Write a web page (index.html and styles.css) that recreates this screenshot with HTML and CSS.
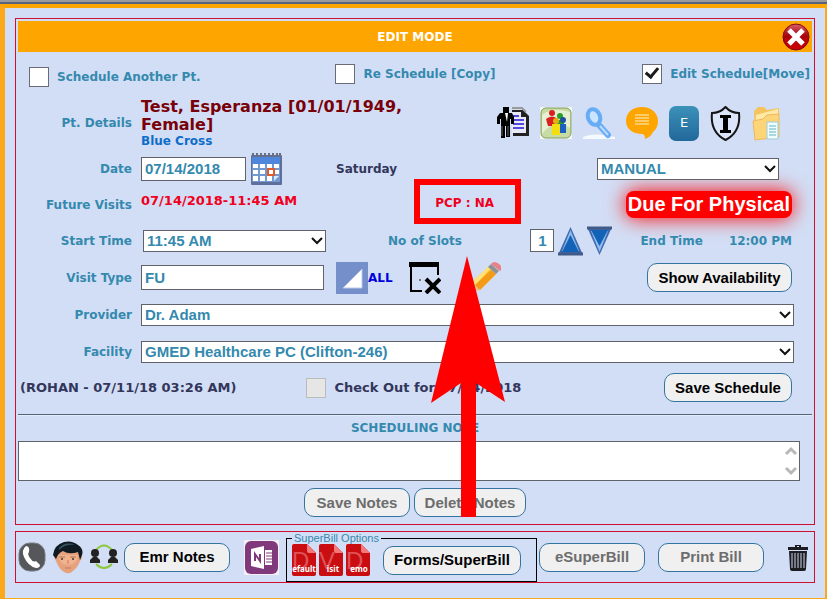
FILE: index.html
```html
<!DOCTYPE html>
<html lang="en">
<head>
<meta charset="utf-8">
<meta name="viewport" content="width=device-width, initial-scale=1">
<title>Edit Mode</title>
<link rel="stylesheet" href="styles.css">
</head>
<body>
<main class="dialog">
  <form class="panel">
    <header class="titlebar">
      <h1>EDIT MODE</h1>
      <button type="button" class="icon-btn close" aria-label="Close">
        <svg width="28" height="28" viewBox="0 0 28 28"><defs><linearGradient id="gc" x1="0" y1="0" x2="0" y2="1"><stop offset="0" stop-color="#d9606a"/><stop offset=".45" stop-color="#a8040e"/><stop offset="1" stop-color="#d00000"/></linearGradient></defs><circle cx="14" cy="14" r="13" fill="url(#gc)" stroke="#7c0a10"/><path d="M7 7l14 14M21 7L7 21" stroke="#fff" stroke-width="5"/></svg>
      </button>
    </header>

    <div class="modes">
      <label class="check low"><input type="checkbox"><span>Schedule Another Pt.</span></label>
      <label class="check copy"><input type="checkbox"><span>Re Schedule [Copy]</span></label>
      <label class="check"><input type="checkbox" checked><span>Edit Schedule[Move]</span></label>
    </div>

    <div class="row patient">
      <span class="label">Pt. Details</span>
      <div class="field">
        <div class="who"><strong>Test, Esperanza [01/01/1949, Female]</strong><span>Blue Cross</span></div>
        <div class="tools">
          <svg width="32" height="34" viewBox="0 0 32 34"><path d="M15 4h11l6 6v20H16V27h12V12h-5V7H15z" fill="#222"/><path d="M15 6h9v5h5v16H15z" fill="#e8eaf6"/><path d="M15 2h10l4 4" fill="none" stroke="#999" stroke-width="2"/><path d="M16 10h6M16 14h11M16 18h11M16 22h11" stroke="#5248e0" stroke-width="2"/><path d="M6 1h6v6H6zM3 7h12l2 4v7h-3v-5h-1v18h-4V20H8v12H4V13H3v5H0v-7z" fill="#000"/><path d="M8 7h3l-1 9z" fill="#fff"/><path d="M5 20v10M11 20v10" stroke="#666"/></svg>
          <svg width="32" height="32" viewBox="0 0 32 32"><rect width="32" height="32" fill="#f5f8ef"/><rect x="1" y="1" width="30" height="30" rx="5" fill="#c7dba4" stroke="#809b60"/><path d="M2 8q10-8 28-3v16Q15 10 2 27z" fill="#e7efd3"/><circle cx="12" cy="6" r="3" fill="#d82020"/><path d="M6 12q6-5 12 0v7H8z" fill="#d82020"/><circle cx="20" cy="9" r="3" fill="#28a028"/><path d="M15 15q5-4 9-1v6h-9z" fill="#28a028"/><circle cx="23" cy="13" r="3" fill="#1e50a0"/><path d="M19 17h7v9h-7z" fill="#1b5fc0"/><circle cx="16" cy="14" r="3" fill="#e2b010"/><path d="M12 17h8v11h-8z" fill="#f3df10"/></svg>
          <svg width="32" height="32" viewBox="0 0 32 32"><path d="M0 30q10-5 32 0v2H0z" fill="#f4faff"/><ellipse cx="11" cy="10" rx="6" ry="8" fill="#cbe4ff" stroke="#67adf5" stroke-width="4" transform="rotate(-20 11 10)"/><path d="M16 18l9 10" stroke="#67adf5" stroke-width="6" stroke-linecap="round"/><path d="M17 19l8 9" stroke="#b9dcff" stroke-width="2"/></svg>
          <svg width="32" height="32" viewBox="0 0 32 32"><path d="M16 0C6 0 0 6 0 14s7 13 16 13q3 0 3 5 6-2 8-7 5-4 5-11C32 6 25 0 16 0z" fill="#ffa500"/><path d="M9 8h14M9 11h14M9 14h14M9 17h14" stroke="#fff2d0"/></svg>
          <svg width="30" height="35" viewBox="0 0 30 35"><defs><linearGradient id="ge" x1="0" y1="0" x2="0" y2="1"><stop offset="0" stop-color="#3b91b8"/><stop offset="1" stop-color="#22689b"/></linearGradient></defs><rect width="30" height="35" rx="7" fill="url(#ge)"/><text x="15" y="21" text-anchor="middle" class="tool-e">E</text></svg>
          <svg width="31" height="35" viewBox="0 0 31 35"><path d="M15.500 1Q10 7 2 7q-2 19 13.500 27Q31 26 29 7 21 7 15.500 1z" fill="#dbe4f8" stroke="#151515" stroke-width="2"/><path d="M10 9h11v3h-3v12h3v3H10v-3h3V12h-3z" fill="#000"/></svg>
          <svg width="30" height="35" viewBox="0 0 30 35"><path d="M2 5l4-4h6l3 3 12-2v26L3 33z" fill="#f5c45f"/><path d="M4 9l22-6v23L4 32z" fill="#ffeaa5"/><path d="M1 15l10-2 4-4 12-1v23L3 34z" fill="#fcd578" stroke="#edb85d"/><path d="M15 16h11v17H15z" fill="#f0fcff" stroke="#9fcbd5"/><path d="M17 20h7M17 23h7M17 26h7M17 29h7" stroke="#61b5c7"/></svg>
        </div>
      </div>
    </div>

    <div class="row">
      <label class="label" for="date">Date</label>
      <div class="field">
        <input class="date" id="date" type="text" value="07/14/2018">
        <button type="button" class="icon-btn" aria-label="Open calendar"><svg width="32" height="32" viewBox="0 0 32 32"><rect x="1" y="2" width="31" height="30" rx="1" fill="#5e6f9c"/><rect x="2" y="4" width="28" height="7" fill="#4e86db"/><rect x="2" y="11" width="28" height="18" fill="#7298d2"/><path d="M3 11h5v4H3zM10 11h5v4h-5zM17 11h5v4h-5zM24 11h5v4h-5zM3 17h5v4H3zM10 17h5v4h-5zM24 17h5v4h-5zM3 23h5v5H3zM10 23h5v5h-5zM17 23h5v5h-5z" fill="#fff"/><path d="M18 16h6v6h-6z" fill="#fff" stroke="#df5b27" stroke-width="2"/><path d="M24 23h5l-5 5z" fill="#dce8ff"/><path d="M3 0v4M7 0v4M11 0v4M15 0v4M19 0v4M23 0v4M27 0v4M30 0v4" stroke="#6b7080" stroke-width="2"/></svg></button>
        <span class="dark day">Saturday</span>
        <span class="select manual"><select aria-label="Schedule type"><option>MANUAL</option></select><svg width="12" height="8" viewBox="0 0 12 8"><path d="M1 1l5 5 5-5"/></svg></span>
      </div>
    </div>

    <div class="row future">
      <span class="label">Future Visits</span>
      <div class="field">
        <span class="alert visit">07/14/2018-11:45 AM</span>
        <span class="alert pcp">PCP : NA</span>
        <strong class="due">Due For Physical</strong>
      </div>
    </div>

    <div class="row">
      <label class="label" for="start">Start Time</label>
      <div class="field">
        <span class="select short"><select id="start"><option>11:45 AM</option></select><svg width="12" height="8" viewBox="0 0 12 8"><path d="M1 1l5 5 5-5"/></svg></span>
        <label class="slots-label" for="slots">No of Slots</label>
        <input class="slots" id="slots" type="text" value="1">
        <button type="button" class="icon-btn up" aria-label="More slots"><svg width="25" height="30" viewBox="0 0 25 30"><path d="M12.500 1L25 29H0z" fill="#4169ae"/><path d="M12.500 4L21 25H4z" fill="#8fbdf0"/><path d="M12.500 9L21 26H4z" fill="#1263b8"/><path d="M0 28h25" stroke="#405b85" stroke-width="3"/></svg></button>
        <button type="button" class="icon-btn down" aria-label="Fewer slots"><svg width="25" height="30" viewBox="0 0 25 30"><path d="M12.500 29L0 1h25z" fill="#4169ae"/><path d="M12.500 26L4 5h17z" fill="#8fbdf0"/><path d="M12.500 20L4 4h17z" fill="#1263b8"/><path d="M0 2h25" stroke="#405b85" stroke-width="3"/></svg></button>
        <span class="end">End Time</span><span class="end-value">12:00 PM</span>
      </div>
    </div>

    <div class="row">
      <label class="label" for="type">Visit Type</label>
      <div class="field">
        <input class="type" id="type" type="text" value="FU">
        <button type="button" class="icon-btn all"><svg width="32" height="32" viewBox="0 0 32 32"><rect width="32" height="32" fill="#758fcb"/><path d="M26 7v19H7z" fill="#fff" stroke="#b9c8ea"/></svg><span>ALL</span></button>
        <button type="button" class="icon-btn block" aria-label="Block slot"><svg width="32" height="32" viewBox="0 0 32 32"><path d="M1 3h28M2 1v29M1 29h12M29 1v12" fill="none" stroke="#000" stroke-width="2"/><path d="M0 0h30v5H0z"/><path d="M10 18h2" stroke="#777" stroke-width="2"/><path d="M17 17l14 14M31 17L17 31" stroke="#000" stroke-width="4"/></svg></button>
        <button type="button" class="icon-btn" aria-label="Edit visit type"><svg width="34" height="34" viewBox="0 0 34 34"><path d="M2 32l3-11 8 8z" fill="#e8c18a"/><path d="M5 21L21 6l8 7-16 16z" fill="#ffc32a"/><path d="M8 24L24 9l5 4-16 16z" fill="#f39a16"/><path d="M5 21L21 6l2 2L8 24z" fill="#ffe27b"/><path d="M21 6l3-3 8 7-3 3z" fill="#8d9296"/><path d="M24 3q3-4 8 0t1 7z" fill="#e98288"/></svg></button>
        <button type="button" class="btn end-btn availability">Show Availability</button>
      </div>
    </div>

    <div class="row">
      <label class="label" for="provider">Provider</label>
      <div class="field"><span class="select full"><select id="provider"><option>Dr. Adam</option></select><svg width="12" height="8" viewBox="0 0 12 8"><path d="M1 1l5 5 5-5"/></svg></span></div>
    </div>

    <div class="row">
      <label class="label" for="facility">Facility</label>
      <div class="field"><span class="select full"><select id="facility"><option>GMED Healthcare PC (Clifton-246)</option></select><svg width="12" height="8" viewBox="0 0 12 8"><path d="M1 1l5 5 5-5"/></svg></span></div>
    </div>

    <div class="saved">
      <span class="dark">(ROHAN - 07/11/18 03:26 AM)</span>
      <label class="check dark"><input type="checkbox" disabled><span>Check Out for 07/14/2018</span></label>
      <button type="button" class="btn end-btn schedule">Save Schedule</button>
    </div>

    <hr>
    <label class="note-title" for="note">SCHEDULING NOTE</label>
    <div class="note">
      <textarea id="note"></textarea>
      <svg width="14" height="32" viewBox="0 0 14 32"><path d="M2 9l5-5 5 5M2 23l5 5 5-5"/></svg>
    </div>
    <div class="note-actions">
      <button type="button" class="btn" disabled>Save Notes</button>
      <button type="button" class="btn delete" disabled>Delete Notes</button>
    </div>
  </form>

  <footer class="panel actions">
    <button type="button" class="icon-btn" aria-label="Call"><svg width="28" height="30" viewBox="0 0 28 30"><rect x="1" y="1" width="26" height="28" rx="11" fill="#55575a" stroke="#777a80"/><path d="M8 4q-5 4-2 11 4 9 12 11 4 0 4-3l-4-4q-3 2-6-3-3-4-1-6 1-6-3-6z" fill="#fff"/></svg></button>
    <button type="button" class="icon-btn face" aria-label="Patient profile"><svg width="30" height="33" viewBox="0 0 30 33"><path d="M3 14q-3 2 0 6 3 8 8 11 5 3 9-1 5-4 7-10 4-5 0-7L24 6H6z" fill="#e6a17d"/><path d="M5 14h20q0 9-10 10Q7 24 5 14z" fill="#f1b38f"/><path d="M0 14Q1 4 11 1q8-2 14 3 6 4 4 10l-2 5-2-8q-9 3-15-1-5 2-7 8z" fill="#101a22"/><path d="M6 7q7-7 16-3-10-1-16 5z" fill="#365263"/><path d="M6 16h6M17 16h6" stroke="#a8704f"/><circle cx="9" cy="18" r="1" fill="#4a3529"/><circle cx="20" cy="18" r="1" fill="#4a3529"/><path d="M15 19v4M12 27h6" stroke="#c9795f"/></svg></button>
    <button type="button" class="icon-btn" aria-label="Transfer"><svg width="28" height="26" viewBox="0 0 28 26"><path d="M6 6q8-9 16 0M6 20q8 8 16 0" fill="none" stroke="#8dc63f" stroke-width="2"/><g fill="#222"><circle cx="5" cy="9" r="4"/><path d="M0 19v-3l3-3h4l3 3v3z"/><circle cx="23" cy="9" r="4"/><path d="M18 19v-3l3-3h4l3 3v3z"/></g></svg></button>
    <button type="button" class="btn emr">Emr Notes</button>
    <button type="button" class="icon-btn onenote" aria-label="OneNote"><svg width="35" height="35" viewBox="0 0 35 35"><rect width="35" height="35" fill="#f5f0f8"/><rect x="1" y="1" width="33" height="33" rx="6" fill="#80397b"/><path d="M21 10h7v15h-7z" fill="#fff"/><path d="M22 13h6M22 16h6M22 19h6M22 22h6" stroke="#80397b"/><path d="M7 9l13-3v23L7 26z" fill="#fff"/><path d="M11 21v-7l5 7v-7" fill="none" stroke="#80397b" stroke-width="2"/></svg></button>
    <fieldset>
      <legend>SuperBill Options</legend>
      <button type="button" class="icon-btn"><svg class="pdf" width="24" height="32" viewBox="0 0 24 32"><path d="M2 0h13l9 9v21q0 2-2 2H2q-2 0-2-2V2q0-2 2-2z" fill="#c90d11"/><path d="M15 0l9 9h-7q-2 0-2-2z" fill="#f4797b"/><text x="0" y="25" class="big">D</text><text x="12" y="28" class="small">efault</text></svg></button>
      <button type="button" class="icon-btn"><svg class="pdf" width="24" height="32" viewBox="0 0 24 32"><path d="M2 0h13l9 9v21q0 2-2 2H2q-2 0-2-2V2q0-2 2-2z" fill="#c90d11"/><path d="M15 0l9 9h-7q-2 0-2-2z" fill="#f4797b"/><text x="0" y="25" class="big">V</text><text x="14" y="28" class="small">isit</text></svg></button>
      <button type="button" class="icon-btn"><svg class="pdf" width="24" height="32" viewBox="0 0 24 32"><path d="M2 0h13l9 9v21q0 2-2 2H2q-2 0-2-2V2q0-2 2-2z" fill="#c90d11"/><path d="M15 0l9 9h-7q-2 0-2-2z" fill="#f4797b"/><text x="0" y="25" class="big">D</text><text x="13" y="28" class="small">emo</text></svg></button>
      <button type="button" class="btn forms">Forms/SuperBill</button>
    </fieldset>
    <button type="button" class="btn esuper" disabled>eSuperBill</button>
    <button type="button" class="btn print" disabled>Print Bill</button>
    <button type="button" class="icon-btn trash" aria-label="Delete schedule"><svg width="20" height="27" viewBox="0 0 20 27"><path d="M0 3h7V1h6v2h7v3H0zM9 2v1h2V2zM1 7h18l-1 18q0 2-2 2H4q-2 0-2-2z" fill="#1c1c22"/><path d="M4 9v15M7 9v15M10 9v15M13 9v15M16 9v15" stroke="#cdd7ed" stroke-width="1"/></svg></button>
  </footer>

  <div class="callout-box"></div>
  <svg class="callout-arrow" width="76" height="262" viewBox="0 0 76 262"><path d="M37 0L75 146 46 127V261H31V127L1 147z" fill="#f00"/></svg>
</main>
</body>
</html>
```
FILE: styles.css
```css
* { box-sizing: border-box; }

body {
  margin: 0;
  background: #d2def5;
  font: bold 12px/16px "DejaVu Sans", Verdana, sans-serif;
  color: #3489ae;
}

body::before {
  content: "";
  display: block;
  height: 2px;
  background: #9b9b9d;
  border-bottom: 2px solid #58647d;
}

.dialog {
  position: relative;
  min-height: calc(100vh - 4px);
  padding: 10px 10px 14px;
  border: solid #fba81a;
  border-width: 4px 2px 1px 5px;
  border-top-color: #ffa500;
}

.panel {
  border: 1px solid #d01030;
  padding: 2px;
}

button, input, select, textarea { font: inherit; color: inherit; margin: 0; }
svg { display: block; flex: none; }

.icon-btn {
  display: flex;
  align-items: center;
  flex: none;
  padding: 0;
  border: 0;
  background: none;
}

.titlebar {
  display: flex;
  align-items: center;
  height: 31px;
  padding: 0 2px 0 30px;
  background: #ffa500;
  color: #fff;
}
.titlebar h1 { flex: 1; margin: 0; font-size: 12px; text-align: center; }

.modes {
  display: flex;
  justify-content: space-between;
  align-items: flex-start;
  height: 44px;
  padding: 12px 2px 0 11px;
}
.check { display: flex; align-items: center; gap: 8px; }
.check.low { padding-top: 3px; }
.check.copy { margin-right: 12px; }
.check input {
  appearance: none;
  width: 20px;
  height: 20px;
  border: 1px solid #696c75;
  background: #fff;
}
.check input:checked::after {
  content: "";
  display: block;
  width: 5px;
  height: 10px;
  margin: 0 0 0 5px;
  border: solid #1b1b1b;
  border-width: 0 3px 3px 0;
  transform: rotate(40deg);
}
.check input:disabled { border-color: #bbb; background: #e6e6e6; }

.row {
  display: grid;
  grid-template-columns: 114px minmax(0, 1fr);
  column-gap: 9px;
  align-items: center;
  height: 37px;
  padding-right: 18px;
}
.label { text-align: right; }
.field { display: flex; align-items: center; min-width: 0; }
.dark { color: #33365c; }
.alert { color: #f0001c; }

.patient { height: 54px; }
.who { flex: 0 1 300px; line-height: 14px; }
.who strong { display: block; font-size: 16px; line-height: 18px; color: #790008; }
.who span { color: #0e6dc8; }
.tools { display: flex; align-items: center; gap: 11px; margin-left: auto; padding-right: 12px; }
.tool-e { font: 13px "DejaVu Sans", sans-serif; fill: #fff; }

input[type="text"], .select select {
  border: 1px solid #5f6369;
  background: #fff;
  font: bold 15px/18px "Liberation Sans", Arial, sans-serif;
  padding: 0 3px;
  border-radius: 0;
}
.date { width: 105px; height: 24px; }
.date + .icon-btn { margin-left: 4px; }
.day { margin-left: 54px; }
.type { width: 183px; height: 25px; }

.select { position: relative; display: block; }
.select select { display: block; appearance: none; width: 100%; height: 22px; }
.select svg { position: absolute; right: 3px; top: 7px; fill: none; stroke: #111; stroke-width: 2; pointer-events: none; }
.select.short { width: 183px; margin-left: 2px; }
.select.manual { width: 182px; margin-left: auto; margin-right: 15px; }
.select.full { width: 100%; }

.future { height: 35px; }
.visit { padding-bottom: 8px; font-size: 13px; }
.pcp { margin-left: 138px; padding-bottom: 4px; }
.due {
  margin-left: auto;
  margin-right: 2px;
  padding: 0 2px;
  border-radius: 8px;
  background: #f00;
  box-shadow: 0 0 20px #f00;
  color: #fff;
  font: bold 20px/27px "Liberation Sans", Arial, sans-serif;
}

.slots-label { margin-left: 62px; }
.field .slots { width: 24px; height: 23px; margin-left: auto; padding: 0; text-align: center; }
.up, .down { margin-left: 4px; }
.end { margin-left: 28px; }
.end-value { margin: 0 2px 0 26px; }

.all { margin-left: 12px; color: #00d; }
.block { margin: 0 26px 0 16px; }

.btn {
  width: 106px;
  height: 29px;
  flex: none;
  padding: 0;
  border: 1px solid #3474a0;
  border-radius: 10px;
  background: #f0f0f0;
  color: #000;
  font: bold 15px/18px "Liberation Sans", Arial, sans-serif;
}
.btn:disabled { color: #6d6d6d; }
.end-btn { margin-left: auto; margin-right: 2px; }
.availability { width: 145px; }
.schedule { width: 128px; }

.saved { display: flex; align-items: center; height: 35px; padding: 0 18px 0 2px; font-size: 13px; }
.saved .check { margin-left: 70px; }

hr { height: 2px; margin: 9px 0 0; border: 0; border-top: 1px solid #50647c; background: #e6ecf8; }
.note-title { display: block; line-height: 25px; text-align: center; }
.note { position: relative; margin-right: 12px; }
.note textarea {
  display: block;
  width: 100%;
  height: 40px;
  border: 1px solid #5f6369;
  background: #fff;
  resize: none;
  overflow: hidden;
}
.note svg { position: absolute; right: 2px; top: 4px; fill: none; stroke: #b8b8b8; stroke-width: 3; }
.note-actions { display: flex; justify-content: center; gap: 4px; padding: 7px 0 5px; }
.delete { width: 112px; }

.actions { display: flex; align-items: center; height: 52px; margin-top: 6px; }
.face { margin: 0 7px; }
.emr { margin-left: 6px; }
.onenote { margin: 0 7px 0 14px; }
fieldset {
  display: flex;
  align-items: center;
  gap: 3px;
  flex: 0 0 251px;
  margin: 0 2px 0 0;
  padding: 0 5px 5px;
  height: 50px;
  min-width: 0;
  border: 1px solid #000;
}
legend { padding: 0 2px; font: 11px/12px "Liberation Sans", Arial, sans-serif; }
.forms { width: 138px; margin-left: 10px; }
.print { margin-left: 13px; }
.trash { margin: 0 4px 0 auto; }
.big { font: 24px "Liberation Sans", sans-serif; fill: #de5356; }
.small { font: bold 8px "Noto Sans", sans-serif; fill: #fff; text-anchor: middle; }

.callout-box {
  position: absolute;
  left: 409px;
  top: 171px;
  width: 107px;
  height: 45px;
  border: 6px solid #f00;
}
.callout-arrow { position: absolute; left: 425px; top: 248px; pointer-events: none; }
```
